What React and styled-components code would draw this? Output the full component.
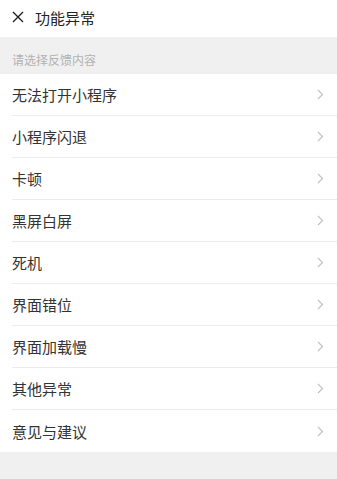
import React from 'react'
import styled, { createGlobalStyle } from 'styled-components'

const GlobalStyle = createGlobalStyle`
    html, body {
        margin: 0;
        padding: 0;
        background: #f0f0f0;
    }
    body {
        font-family: 'Noto Sans CJK SC', 'Noto Sans', sans-serif;
    }
`

const items = [
    '无法打开小程序',
    '小程序闪退',
    '卡顿',
    '黑屏白屏',
    '死机',
    '界面错位',
    '界面加载慢',
    '其他异常',
    '意见与建议'
]

const CloseIcon = () => (
    <svg width="12" height="12" viewBox="0 0 12 12">
        <path d="M1 1 L11 11 M11 1 L1 11" stroke="#222" strokeWidth="1.4" fill="none" />
    </svg>
)

const Chevron = () => (
    <svg width="7" height="11" viewBox="0 0 7 11">
        <path d="M1 1 L5.5 5.5 L1 10" stroke="#c2c2c2" strokeWidth="1.2" fill="none" />
    </svg>
)

export default function App() {
    return (
        <>
            <GlobalStyle />
            <Page>
                <Header>
                    <CloseBtn><CloseIcon /></CloseBtn>
                    <Title>功能异常</Title>
                </Header>
                <Hint>请选择反馈内容</Hint>
                <List>
                    {items.map((item, i) => (
                        <Row key={item} $last={i === items.length - 1}>
                            <span>{item}</span>
                            <Chevron />
                        </Row>
                    ))}
                </List>
            </Page>
        </>
    )
}

const Page = styled.div`
    width: 337px;
    min-height: 479px;
    background: #f0f0f0;
`
const Header = styled.header`
    height: 37px;
    background: #fff;
    display: flex;
    align-items: center;
    padding: 0 12px 3px;
    box-sizing: border-box;
    gap: 11px;
`
const CloseBtn = styled.div`
    width: 12px;
    height: 12px;
    display: flex;
`
const Title = styled.h1`
    margin: 0;
    font-size: 15px;
    font-weight: 400;
    color: #222;
    line-height: 1;
`
const Hint = styled.div`
    height: 37px;
    padding: 8px 12px 0;
    display: flex;
    align-items: center;
    box-sizing: border-box;
    font-size: 12px;
    color: #b2b2b2;
`
const List = styled.div`
    background: #fff;
    padding-left: 12px;
`
const Row = styled.div`
    height: 42px;
    box-sizing: border-box;
    display: flex;
    align-items: center;
    justify-content: space-between;
    padding-right: 13px;
    border-bottom: ${p => p.$last ? 'none' : '1px solid #ececec'};
    font-size: 15px;
    color: #333;
`
